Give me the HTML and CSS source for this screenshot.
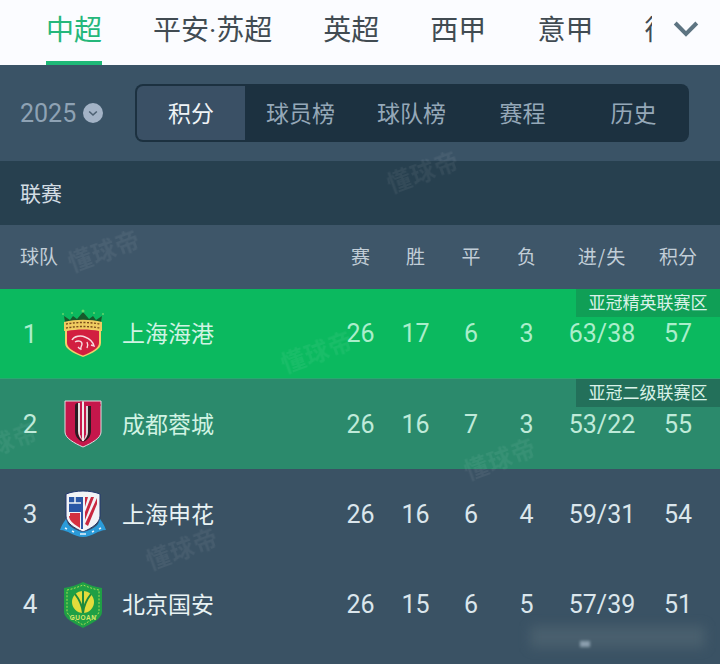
FILE: index.html
```html
<!DOCTYPE html>
<html lang="zh">
<head>
<meta charset="utf-8">
<title>中超积分榜</title>
<link rel="stylesheet" href="styles.css">
</head>
<body>
<div class="page">
  <nav class="nav">
    <div class="nav-tabs">
      <a class="nav-tab nav-tab-active">中超</a>
      <a class="nav-tab">平安·苏超</a>
      <a class="nav-tab">英超</a>
      <a class="nav-tab">西甲</a>
      <a class="nav-tab">意甲</a>
      <a class="nav-tab">德甲</a>
    </div>
    <div class="nav-more">
      <svg width="26" height="16" viewBox="0 0 26 16"><path d="M2.200 2 13 13 23.800 2" fill="none" stroke="#5d7482" stroke-width="4"/></svg>
    </div>
  </nav>

  <section class="filter">
    <div class="year">
      <span>2025</span>
      <svg width="20" height="20" viewBox="0 0 20 20"><circle cx="10" cy="10" r="10" fill="#a3b3c6"/><path d="M6.200 8.500 10 12l3.800-3.500" fill="none" stroke="#4c6072" stroke-width="1.600"/></svg>
    </div>
    <div class="segments">
      <a class="segment segment-active">积分</a>
      <a class="segment">球员榜</a>
      <a class="segment">球队榜</a>
      <a class="segment">赛程</a>
      <a class="segment">历史</a>
    </div>
  </section>

  <div class="league">联赛</div>

  <div class="grid head">
    <span class="head-team">球队</span>
    <span>赛</span><span>胜</span><span>平</span><span>负</span><span class="head-diff">进/失</span><span>积分</span>
  </div>

  <div class="grid row row-green">
    <span class="rank">1</span>
    <svg class="logo" width="46" height="50" viewBox="0 0 46 50">
      <path d="M5 13 4 7l6 4 3-4 4 3 6-7 6 7 4-3 3 4 6-4-1 6z" fill="#17592b"/>
      <g fill="#63d46b"><circle cx="3" cy="5" r="1"/><circle cx="12" cy="4" r="1"/><circle cx="34" cy="4" r="1"/><circle cx="43" cy="5" r="1"/><circle cx="23" cy="2" r="1.500"/></g>
      <path d="M4 13c12-3 26-3 38 0v9H4z" fill="#efcb60"/>
      <path d="M6 15c11-2 23-2 34 0M6 19c11-2 23-2 34 0" fill="none" stroke="#7a4c1a" stroke-width="1.400" stroke-dasharray="2 1.500"/>
      <path d="M5 21c12-2 24-2 36 0v13c0 6-8 10-18 14C13 44 5 40 5 34z" fill="#f2d06a"/>
      <path d="M7 22c10-2 22-2 32 0v12c0 5-7 9-16 12.500C14 43 7 39 7 34z" fill="#d21f40"/>
      <path d="M12 31c2-4 9-5 13-3 5 2 8 5 9 9l-3-1M15 33c3-2 7-1 7 2 0 2-2 3-1 6M18 38l2 2M27 33c1 2 1 4 0 6" fill="none" stroke="#f7dde0" stroke-width="1.400"/>
    </svg>
    <span class="team">上海海港</span>
    <span>26</span><span>17</span><span>6</span><span>3</span><span>63/38</span><span>57</span>
    <span class="zone zone-green">亚冠精英联赛区</span>
  </div>

  <div class="grid row row-teal">
    <span class="rank">2</span>
    <svg class="logo" width="46" height="50" viewBox="0 0 46 50">
      <path d="M5 2h36v31c0 6-9 11-18 15C14 44 5 39 5 33z" fill="#c5174b" stroke="#e4dde0" stroke-width="1"/>
      <path d="M15 7c0-2 1-3 3-3v29c0 4 2 7 5 10-5-2-8-6-8-11z" fill="#2a1c22"/>
      <path d="M18 4h2v29c0 3 1 6 3 9-3-3-5-6-5-10z" fill="#e8e3e3"/>
      <path d="M31 7h-3v26c0 3-2 7-5 10 5-2 8-6 8-11z" fill="#2a1c22"/>
      <path d="M26 7h2v26c0 3-2 7-5 9 2-3 3-6 3-9z" fill="#d9d5d6"/>
      <path d="M20 2.500h2V36h-2zM24 7h2v29h-2z" fill="#c5174b"/>
      <path d="M22 2.500h2V42h-2z" fill="#efeaea"/>
      <path d="M24 5h16.500v2H24z" fill="#c5174b"/>
    </svg>
    <span class="team">成都蓉城</span>
    <span>26</span><span>16</span><span>7</span><span>3</span><span>53/22</span><span>55</span>
    <span class="zone zone-teal">亚冠二级联赛区</span>
  </div>

  <div class="grid row">
    <span class="rank">3</span>
    <svg class="logo" width="46" height="50" viewBox="0 0 46 50">
      <path d="M6 5c10-4 24-4 34 0v22c0 7-8 12-17 16C14 39 6 34 6 27z" fill="#f2f3f6" stroke="#22386f" stroke-width="1"/>
      <path d="M9 8h12v15H9z" fill="#2b57a6"/>
      <path d="M9 14h12" stroke="#f2f3f6" stroke-width="1.500"/>
      <path d="M15 8v6" stroke="#f2f3f6" stroke-width="1.500"/>
      <path d="M10 24h10v3H10z" fill="#d5303f"/>
      <path d="M9 27c0 5 6 9 11 12V27z" fill="#d5303f"/>
      <path d="M21 8h2v32h-2z" fill="#2b57a6"/>
      <path d="M25 8h3l-3 10zM31 8h3l-9 23v-8zM37 9v6l-9 22-3-2z" fill="#c9283f"/>
      <path d="M0 41c2-6 4-8 6-11l2 5c3 4 10 7 15 8 5-1 12-4 15-8l2-5c2 3 4 5 6 11-4 0-8 2-10 3-4 2-9 4-13 4s-9-2-13-4c-2-1-6-3-10-3z" fill="#2b9bd9"/>
      <path d="M5 39l2 1M12 42l2 1M20 45h6M32 43l2-1M39 40l2-1" stroke="#e8f3fa" stroke-width="1.500"/>
    </svg>
    <span class="team">上海申花</span>
    <span>26</span><span>16</span><span>6</span><span>4</span><span>59/31</span><span>54</span>
  </div>

  <div class="grid row">
    <span class="rank">4</span>
    <svg class="logo" width="46" height="50" viewBox="0 0 46 50">
      <path d="M4 9c7-1 13-3 19-6 6 3 12 5 19 6v24c0 6-9 11-19 16C13 44 4 39 4 33z" fill="#1f9f45"/>
      <path d="M7 11c6-1 11-3 16-5 5 2 10 4 16 5v21c0 5-8 9-16 14C15 41 7 37 7 32z" fill="none" stroke="#a9dc52" stroke-width="1" stroke-dasharray="2 1.500"/>
      <circle cx="23" cy="23" r="11" fill="#e3dc3c"/>
      <path d="M15 15c4 5 7 10 8 19 1-9 4-14 8-19M23 12v22" fill="none" stroke="#1d8a3c" stroke-width="2"/>
      <text class="logo-text" x="23" y="41" text-anchor="middle">GUOAN</text>
    </svg>
    <span class="team">北京国安</span>
    <span>26</span><span>15</span><span>6</span><span>5</span><span>57/39</span><span>51</span>
  </div>

  <span class="mark mark-1">懂球帝</span>
  <span class="mark mark-2">懂球帝</span>
  <span class="mark mark-3">懂球帝</span>
  <span class="mark mark-4">懂球帝</span>
  <span class="mark mark-5">懂球帝</span>
  <span class="mark mark-6">懂球帝</span>
  <div class="smudge"></div>
  <div class="smudge-spot"></div>
</div>
</body>
</html>
```

FILE: styles.css
```css
* {
  box-sizing: border-box;
}

html,
body {
  margin: 0;
  padding: 0;
}

body {
  width: 720px;
  height: 664px;
  overflow: hidden;
  font-family: Roboto, "Noto Sans CJK SC", sans-serif;
}

.page {
  position: relative;
  width: 720px;
  height: 664px;
  overflow: hidden;
  background: #3a5264;
}

.nav {
  position: relative;
  height: 65px;
  background: #fbfcff;
  overflow: hidden;
}

.nav-tabs {
  display: flex;
  width: 652px;
  height: 65px;
  overflow: hidden;
  padding-left: 46px;
  gap: 51px;
}

.nav-tab {
  flex: none;
  height: 65px;
  padding-top: 11px;
  font-size: 28px;
  line-height: 40px;
  color: #414b52;
}

.nav-tab-active {
  color: #25b77b;
  border-bottom: 4px solid #1fb878;
}

.nav-more {
  position: absolute;
  top: 21px;
  right: 21px;
  line-height: 0;
}

.filter {
  display: flex;
  align-items: center;
  height: 96px;
  padding: 0 31px 0 20px;
  background: #3a5366;
}

.year {
  display: flex;
  align-items: center;
  gap: 7px;
  width: 115px;
  font-size: 25px;
  color: #8ea2b4;
}

.segments {
  display: flex;
  flex: 1;
  height: 58px;
  padding: 2px 0 2px 2px;
  background: #1c3140;
  border-radius: 8px;
}

.segment {
  flex: 1;
  font-family: "Noto Sans CJK SC", sans-serif;
  font-size: 23px;
  line-height: 52px;
  text-align: center;
  color: #95a8b8;
}

.segment-active {
  flex: 0 0 108px;
  color: #f0f4f7;
  background: #3a5065;
  border-radius: 6px 0 0 6px;
}

.league {
  height: 64px;
  padding-left: 20px;
  font-family: "Noto Sans CJK SC", sans-serif;
  font-size: 21px;
  line-height: 62px;
  color: #d3dde4;
  background: #27404f;
}

.grid {
  position: relative;
  display: grid;
  grid-template-columns: 60px 46px 227px 55px 55px 56px 55px 96px 56px 14px;
  align-items: center;
  text-align: center;
}

.head {
  height: 64px;
  padding-bottom: 4px;
  font-family: "Noto Sans CJK SC", sans-serif;
  font-size: 19px;
  color: #c2ced8;
  background: #3e5669;
}

.head-team {
  grid-column: 1 / 4;
  padding-left: 20px;
  text-align: left;
}

.head-diff {
  letter-spacing: 1px;
}

.row {
  height: 90px;
  font-size: 25px;
  color: #dbe6ec;
  background: #3a5264;
}

.row-green {
  color: #aaeecb;
  background: #0bb95f;
  border-bottom: 1px solid #2aa770;
}

.row-teal {
  color: #bfead9;
  background: #2b8a6c;
}

.rank {
  font-size: 26px;
}

.logo {
  display: block;
}

.logo-text {
  font-family: "Liberation Sans", sans-serif;
  font-size: 6.500px;
  font-weight: 700;
  letter-spacing: 0.500px;
  fill: #d7e86a;
}

.team {
  padding: 0 0 3px 16px;
  font-family: "Noto Sans CJK SC", sans-serif;
  font-size: 23px;
  text-align: left;
  color: #e8f2f4;
}

.row-green .team,
.row-teal .team {
  color: #d0f3e3;
}

.zone {
  position: absolute;
  top: 0;
  right: 0;
  width: 144px;
  height: 28px;
  font-family: "Noto Sans CJK SC", sans-serif;
  font-size: 17px;
  line-height: 26px;
  color: #d9f2e8;
}

.zone-green {
  background: #109f56;
}

.zone-teal {
  background: #23705a;
}

.mark {
  position: absolute;
  font-family: "Noto Sans CJK SC", sans-serif;
  font-size: 24px;
  font-weight: 700;
  letter-spacing: 1px;
  color: rgba(255, 255, 255, 0.06);
  transform: rotate(-20deg);
  white-space: nowrap;
  filter: blur(0.6px);
}

.mark-1 { left: 385px; top: 153px; }
.mark-2 { left: 279px; top: 333px; }
.mark-3 { left: 462px; top: 440px; }
.mark-4 { left: 144px; top: 530px; }
.mark-5 { left: 66px; top: 232px; }
.mark-6 { left: -36px; top: 424px; }

.smudge {
  position: absolute;
  left: 530px;
  top: 626px;
  width: 175px;
  height: 22px;
  background: rgba(120, 135, 140, 0.25);
  filter: blur(6px);
}

.smudge-spot {
  position: absolute;
  left: 580px;
  top: 641px;
  width: 10px;
  height: 6px;
  background: rgba(169, 188, 203, 0.7);
  filter: blur(1.5px);
}
```
